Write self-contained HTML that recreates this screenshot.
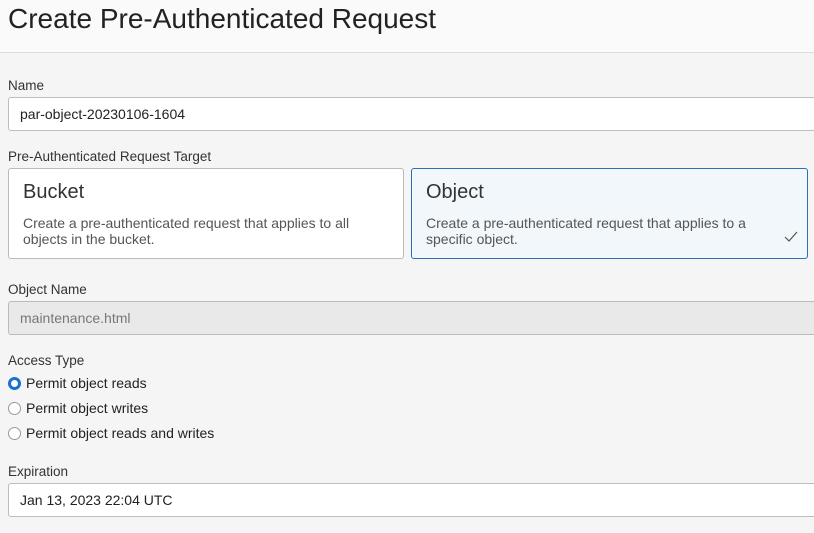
<!DOCTYPE html><html><head><style>
body{margin:0;width:814px;height:533px;overflow:hidden;background:#f5f5f5;font-family:"Liberation Sans",sans-serif;color:#161513;position:relative}
.hd{position:absolute;left:0;top:0;width:814px;height:52px;background:#fafafa;border-bottom:1px solid #ddd}
.hd h1{position:absolute;left:8px;top:3px;margin:0;font-weight:normal;font-size:28px;color:#222}
.a{position:absolute}
.lbl{font-size:13.5px;color:#333}
.in{position:absolute;left:8px;width:820px;height:34px;background:#fff;border:1px solid #bdbdbd;border-radius:3px;box-sizing:border-box;font-size:14px;padding:0 0 0 11px;line-height:33px;color:#222}
.card{position:absolute;top:168px;height:91px;box-sizing:border-box;border:1px solid #bbb;border-radius:3px;background:#fff}
.card .t{position:absolute;left:14px;top:12px;font-size:20px;color:#333}
.card .d{position:absolute;left:14px;top:46px;font-size:14px;line-height:16px;color:#555}
.r{position:absolute;left:8px;font-size:14px;color:#222}
.r i{display:inline-block;width:13px;height:13px;border:1px solid #999;border-radius:50%;box-sizing:border-box;vertical-align:-2px;margin-right:5px;background:#fff}
</style></head><body>
<div class="hd"><h1>Create Pre-Authenticated Request</h1></div>
<div class="a lbl" style="left:8px;top:78px">Name</div>
<div class="in" style="top:97px">par-object-20230106-1604</div>
<div class="a lbl" style="left:8px;top:149px">Pre-Authenticated Request Target</div>
<div class="card" style="left:8px;width:396px"><div class="t">Bucket</div><div class="d">Create a pre-authenticated request that applies to all<br>objects in the bucket.</div></div>
<div class="card" style="left:411px;width:397px;background:#f1f7fb;border-color:#2d6fb3"><div class="t">Object</div><div class="d">Create a pre-authenticated request that applies to a<br>specific object.</div>
<svg class="a" style="left:372px;top:62px" width="14" height="12"><path d="M1 6l4 4 8-9" fill="none" stroke="#555" stroke-width="1.2"/></svg></div>
<div class="a lbl" style="left:8px;top:282px">Object Name</div>
<div class="in" style="top:301px;background:#e9e9e9;color:#777;border-color:#bbb">maintenance.html</div>
<div class="a lbl" style="left:8px;top:353px">Access Type</div>
<div class="r" style="top:375px"><i style="border:3.5px solid #1a6fd0"></i>Permit object reads</div>
<div class="r" style="top:400px"><i></i>Permit object writes</div>
<div class="r" style="top:425px"><i></i>Permit object reads and writes</div>
<div class="a lbl" style="left:8px;top:464px">Expiration</div>
<div class="in" style="top:483px">Jan 13, 2023 22:04 UTC</div>
</body></html>
